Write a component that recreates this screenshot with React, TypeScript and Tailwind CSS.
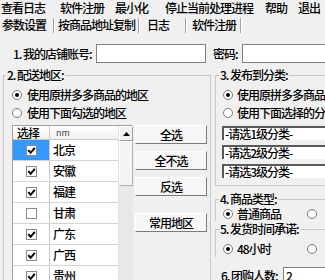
import React from "react";

function Radio({ on }: { on?: boolean }) {
  return (
    <span className="w-[10px] h-[10px] rounded-full border border-[#7a7a7a] bg-white flex items-center justify-center shrink-0">
      {on && <span className="w-[4px] h-[4px] rounded-full bg-black" />}
    </span>
  );
}

function Check({ on }: { on?: boolean }) {
  return (
    <span className="w-[11px] h-[11px] border border-[#8a8a8a] bg-white flex items-center justify-center shrink-0">
      {on && (
        <svg width="9" height="9" viewBox="0 0 9 9">
          <path d="M1.3 4.2 L3.6 6.8 L7.8 1.8" stroke="#000" strokeWidth="2" fill="none" />
        </svg>
      )}
    </span>
  );
}

function Sep() {
  return <span className="w-[2px] h-[15px] border-l border-r border-l-[#a0a0a0] border-r-white shrink-0" />;
}

function Btn({ children }: { children: React.ReactNode }) {
  return (
    <div className="h-[19px] w-[72px] bg-[#f6f6f6] border border-t-white border-l-white border-r-[#7a7a7a] border-b-[#7a7a7a] flex items-center justify-center">
      {children}
    </div>
  );
}

function Sel({ children }: { children: React.ReactNode }) {
  return (
    <div className="h-[14px] w-[140px] bg-white border-t-2 border-l-2 border-t-[#5a5a5a] border-l-[#5a5a5a] flex items-center pl-[1px]">
      {children}
    </div>
  );
}

const rows = [
  { n: "北京", on: true, sel: true },
  { n: "安徽", on: true },
  { n: "福建", on: true },
  { n: "甘肃", on: false },
  { n: "广东", on: true },
  { n: "广西", on: true },
  { n: "贵州", on: true },
];

export default function App() {
  return (
    <div className="w-[325px] h-[280px] overflow-hidden bg-[#f0f0f0] text-[12px] tracking-[-1px] text-black leading-none font-medium font-['Noto_Sans_CJK_SC',sans-serif]">
      {/* menu bar */}
      <div className="flex h-[16px] items-center pl-[1px] whitespace-nowrap">
        <span className="w-[59px] shrink-0">查看日志</span>
        <span className="w-[55px] shrink-0">软件注册</span>
        <span className="w-[50px] shrink-0">最小化</span>
        <span className="w-[100px] shrink-0">停止当前处理进程</span>
        <span className="w-[33px] shrink-0">帮助</span>
        <span className="shrink-0">退出</span>
      </div>
      {/* tabs */}
      <div className="flex h-[18px] items-center whitespace-nowrap">
        <span className="w-[53px] pl-[2px] shrink-0">参数设置</span>
        <Sep />
        <span className="w-[83px] pl-[3px] shrink-0">按商品地址复制</span>
        <Sep />
        <span className="w-[45px] pl-[7px] shrink-0">日志</span>
        <Sep />
        <span className="w-[53px] pl-[5px] shrink-0">软件注册</span>
        <Sep />
      </div>
      {/* account row */}
      <div className="flex items-center h-[19px] mt-[10px] whitespace-nowrap">
        <span className="ml-[13px] w-[83px] shrink-0">1. 我的店铺账号:</span>
        <div className="w-[110px] h-[19px] bg-white border border-[#808080] shrink-0" />
        <span className="ml-[7px] w-[29px] shrink-0">密码:</span>
        <div className="w-[100px] h-[19px] bg-white border border-[#808080] shrink-0" />
      </div>
      {/* groups */}
      <div className="flex mt-[6px] items-start whitespace-nowrap">
        <fieldset className="shrink-0 ml-[3px] w-[208px] h-[230px] border border-[#c8c8c8] p-0 m-0">
          <legend className="ml-[2px] px-[1px] leading-[12px]">2. 配送地区:</legend>
          <div className="pl-[8px] pt-[5px]">
            <div className="flex items-center h-[18px] gap-[5px]">
              <Radio on />
              <span>使用原拼多多商品的地区</span>
            </div>
            <div className="flex items-center h-[18px] gap-[5px]">
              <Radio />
              <span>使用下面勾选的地区</span>
            </div>
            <div className="flex mt-[3px] gap-[3px] items-start">
              <div className="flex w-[120px] border-l border-t border-[#a0a0a0] shrink-0">
                <div className="w-[105px] bg-white shrink-0">
                  <div className="flex h-[14px] border-b border-[#c8c8c8] bg-gradient-to-b from-white to-[#f0f0f0]">
                    <div className="w-[37px] border-r border-[#c8c8c8] pl-[4px] flex items-center">选择</div>
                    <div className="flex-1 pl-[6px] flex items-center text-[9px] tracking-normal font-normal text-[#444]">nm</div>
                  </div>
                  {rows.map((r) => (
                    <div key={r.n} className="flex h-[21px] border-b border-[#d4d4d4]">
                      <div
                        className={
                          r.sel
                            ? "w-[37px] border-r border-[#c8c8c8] flex items-center justify-center bg-[#3399ff]"
                            : "w-[37px] border-r border-[#c8c8c8] flex items-center justify-center"
                        }
                      >
                        <Check on={r.on} />
                      </div>
                      <div className="flex-1 flex items-center pl-[3px] text-[12px]">{r.n}</div>
                    </div>
                  ))}
                </div>
                <div className="w-[15px] shrink-0 bg-[#f0f0f0] border-l border-[#e0e0e0] flex flex-col">
                  <div className="h-[15px] bg-[#f0f0f0] border border-t-white border-l-white border-r-[#a0a0a0] border-b-[#a0a0a0] flex items-center justify-center">
                    <svg width="7" height="4" viewBox="0 0 7 4">
                      <path d="M0 4 L3.5 0 L7 4 Z" fill="#000" />
                    </svg>
                  </div>
                  <div className="h-[45px] bg-[#f4f4f4] border border-t-white border-l-white border-r-[#b0b0b0] border-b-[#b0b0b0]" />
                  <div className="h-[120px] bg-[#e8e8e8]" />
                </div>
              </div>
              <div className="flex flex-col gap-[7px] shrink-0">
                <Btn>全选</Btn>
                <Btn>全不选</Btn>
                <Btn>反选</Btn>
                <div className="mt-[10px]">
                  <Btn>常用地区</Btn>
                </div>
              </div>
            </div>
          </div>
        </fieldset>

        <div className="shrink-0 ml-[4px] w-[150px]">
          <fieldset className="border border-[#c8c8c8] p-0 m-0 pb-[7px]">
            <legend className="ml-[3px] px-[1px] leading-[12px]">3. 发布到分类:</legend>
            <div className="pl-[6px] pt-[5px]">
              <div className="flex items-center h-[18px] gap-[4px] ml-[1px]">
                <Radio on />
                <span>使用原拼多多商品的分类</span>
              </div>
              <div className="flex items-center h-[18px] gap-[4px] ml-[1px]">
                <Radio />
                <span>使用下面选择的分类</span>
              </div>
              <div className="flex flex-col gap-[5px] mt-[4px]">
                <Sel>-请选1级分类-</Sel>
                <Sel>-请选2级分类-</Sel>
                <Sel>-请选3级分类-</Sel>
              </div>
            </div>
          </fieldset>

          <fieldset className="border border-[#c8c8c8] border-b-0 p-0 m-0 mt-[7px]">
            <legend className="ml-[3px] px-[1px] leading-[12px]">4. 商品类型:</legend>
            <div className="pl-[7px] pt-[1px] flex items-center h-[16px] gap-[4px]">
              <Radio on />
              <span className="w-[66px]">普通商品</span>
              <Radio />
            </div>
          </fieldset>

          <fieldset className="border border-[#c8c8c8] border-b-0 p-0 m-0 mt-[2px]">
            <legend className="ml-[3px] px-[1px] leading-[12px]">5. 发货时间承诺:</legend>
            <div className="pl-[7px] pt-[6px] flex items-center h-[22px] gap-[4px]">
              <Radio on />
              <span className="w-[66px]">48小时</span>
              <Radio />
            </div>
          </fieldset>

          <div className="flex items-center h-[18px] mt-[10px] pl-[6px]">
            <span className="w-[62px] shrink-0">6. 团购人数:</span>
            <div className="w-[60px] h-[18px] bg-white border border-[#808080] pl-[2px] flex items-center shrink-0">2</div>
          </div>
        </div>
      </div>
    </div>
  );
}
